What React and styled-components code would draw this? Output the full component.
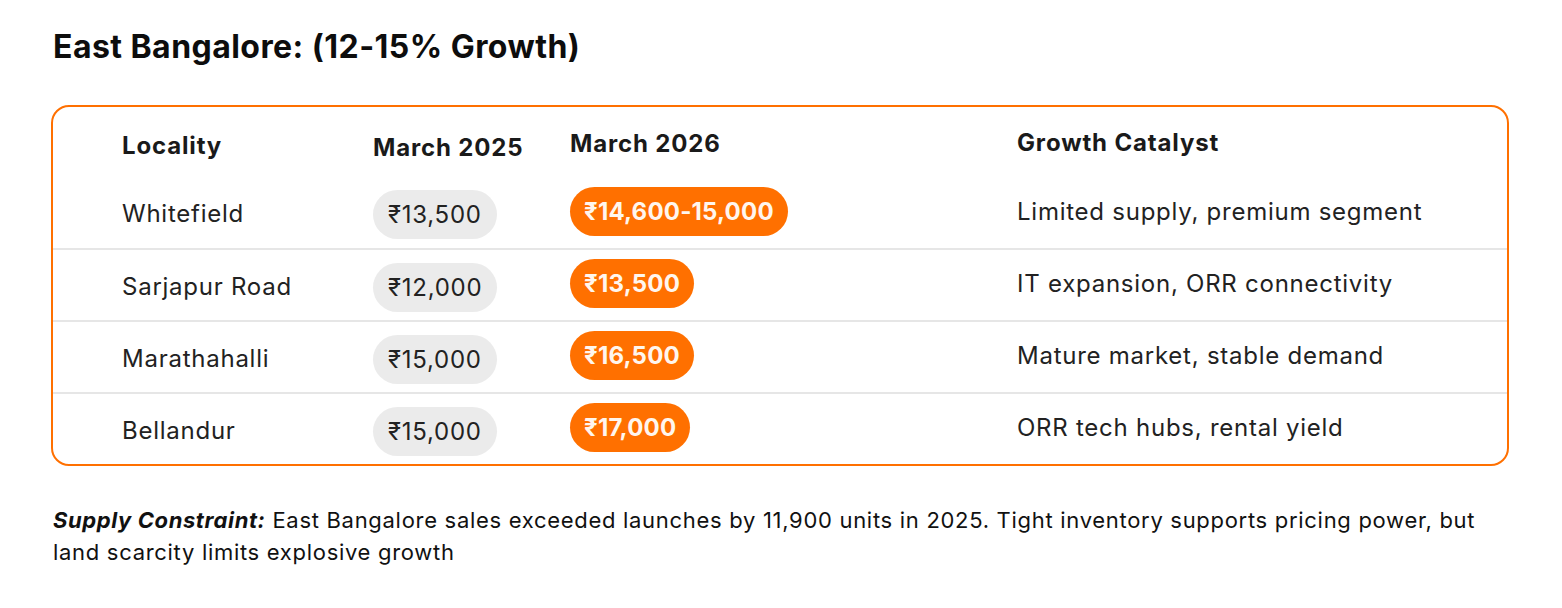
import React from "react";
import styled, { createGlobalStyle } from "styled-components";

const GlobalStyle = createGlobalStyle`
  body {
    margin: 0;
    background: #ffffff;
    font-family: Inter, "Noto Sans", sans-serif;
    color: #1f1f1f;
  }
`;

const Page = styled.div`
  padding: 27px 53px 0 51px;
`;

const Title = styled.h2`
  margin: 0 0 0 2px;
  font-size: 32px;
  line-height: 40px;
  font-weight: 700;
  color: #0d0d0d;
  letter-spacing: 0.45px;
`;

const Card = styled.div`
  margin-top: 38px;
  border: 2px solid #ff7000;
  border-radius: 18px;
  overflow: hidden;
`;

const Row = styled.div`
  display: grid;
  grid-template-columns: 320px 197px 447px 1fr;
  align-items: center;
  height: ${(p) => p.$height}px;
  border-top: ${(p) => (p.$divider ? "2px solid #e6e6e6" : "none")};
`;

const Cell = styled.div`
  padding-left: ${(p) => p.$indent || 0}px;
  margin-top: ${(p) => p.$shift || 0}px;
  font-size: 24px;
  letter-spacing: 0.75px;
  color: #222;
  white-space: nowrap;
`;

const HeadCell = styled(Cell)`
  font-weight: 700;
  letter-spacing: 0.85px;
  color: #1a1a1a;
`;

const Pill = styled.span`
  display: inline-flex;
  align-items: center;
  height: 49px;
  padding: 0 ${(p) => (p.$hot ? 14 : 15)}px;
  border-radius: 25px;
  font-size: 24px;
  letter-spacing: ${(p) => (p.$hot ? 0.2 : 0.75)}px;
  background: ${(p) => (p.$hot ? "#ff7000" : "#ebebeb")};
  color: ${(p) => (p.$hot ? "#fff6ee" : "#222")};
  font-weight: ${(p) => (p.$hot ? 700 : 400)};
`;

const Note = styled.p`
  margin: 38px 0 0 2px;
  font-size: 22px;
  line-height: 32px;
  letter-spacing: 0.7px;
  color: #111;
`;

const Lead = styled.strong`
  font-style: italic;
  font-weight: 700;
  letter-spacing: 0.6px;
`;

const rows = [
  ["Whitefield", "₹13,500", "₹14,600-15,000", "Limited supply, premium segment"],
  ["Sarjapur Road", "₹12,000", "₹13,500", "IT expansion, ORR connectivity"],
  ["Marathahalli", "₹15,000", "₹16,500", "Mature market, stable demand"],
  ["Bellandur", "₹15,000", "₹17,000", "ORR tech hubs, rental yield"],
];

export default function App() {
  return (
    <Page>
      <GlobalStyle />
      <Title>East Bangalore: (12-15% Growth)</Title>
      <Card>
        <Row $height={70}>
          <HeadCell $indent={69} $shift={6}>Locality</HeadCell>
          <HeadCell $shift={10}>March 2025</HeadCell>
          <HeadCell $shift={2}>March 2026</HeadCell>
          <HeadCell>Growth Catalyst</HeadCell>
        </Row>
        {rows.map(([name, before, after, reason], i) => (
          <Row key={name} $height={i === 0 ? 71 : 70} $divider={i > 0}>
            <Cell $indent={69} $shift={2}>{name}</Cell>
            <Cell $shift={4}>
              <Pill>{before}</Pill>
            </Cell>
            <Cell $shift={-3}>
              <Pill $hot>{after}</Pill>
            </Cell>
            <Cell $shift={-3}>{reason}</Cell>
          </Row>
        ))}
      </Card>
      <Note>
        <Lead>Supply Constraint:</Lead> East Bangalore sales exceeded launches
        by 11,900 units in 2025. Tight inventory supports pricing power, but
        land scarcity limits explosive growth
      </Note>
    </Page>
  );
}
